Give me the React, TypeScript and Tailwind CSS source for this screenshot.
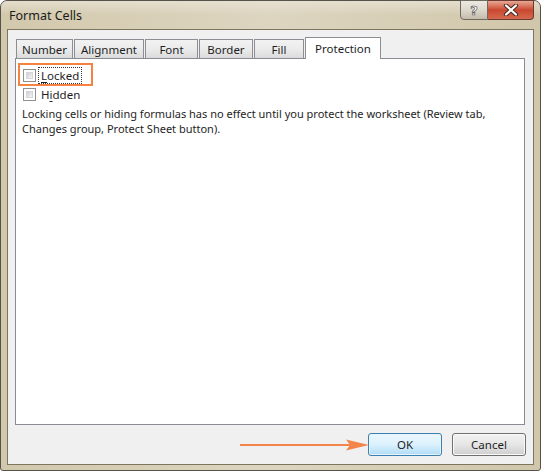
import React from "react";

const font = { fontFamily: '"Noto Sans", "DejaVu Sans", sans-serif' };

function Checkbox() {
  return (
    <div className="w-[13px] h-[13px] border border-[#8e8f8f] bg-white p-[2px] shrink-0">
      <div className="w-full h-full bg-gradient-to-br from-[#cbcfd5] to-[#f6f6f6] border border-[#d4d6da]" />
    </div>
  );
}

function Tab({ label, w }: { label: string; w: string }) {
  return (
    <div
      className={`${w} h-[19px] border border-b-0 border-[#8c8e94] bg-gradient-to-b from-[#f2f2f2] via-[#ebebeb] to-[#dbdbdb] flex items-center justify-center text-[11.5px] text-[#1e1e1e] leading-none pt-[1px]`}
    >
      {label}
    </div>
  );
}

export default function App() {
  return (
    <div className="w-[541px] h-[471px] bg-white" style={font}>
      <div className="relative w-[541px] h-[471px] rounded-t-[7px] rounded-b-[3px] border border-[#55524a] bg-gradient-to-r from-[#d2c8ac] via-[#ddd5c0] to-[#d0c6aa] flex flex-col">
        <div className="absolute inset-x-0 top-0 h-[14px] rounded-t-[6px] bg-gradient-to-b from-[#ebe6d9]/70 to-transparent pointer-events-none" />
        {/* title bar */}
        <div className="relative h-[28px] flex items-start">
          <div className="pl-[8px] pt-[7px] text-[12.5px] text-[#1b1b1b] leading-[16px]">Format Cells</div>
          <div className="ml-auto mr-[6px] -mt-px flex">
            <div className="w-[28px] h-[20px] border border-[#6e6a60] rounded-bl-[4px] bg-gradient-to-b from-[#ece9e2] via-[#ddd8cc] to-[#c3bcab] flex items-center justify-center">
              <span
                className="text-[13px] font-bold text-white leading-none"
                style={{ fontFamily: '"DejaVu Sans", sans-serif', WebkitTextStroke: "0.6px #3f3f3f" }}
              >
                ?
              </span>
            </div>
            <div className="w-[46px] h-[20px] border border-l-0 border-[#6b3a30] rounded-br-[4px] bg-gradient-to-b from-[#e7a795] via-[#c9472f] to-[#d5694f] flex items-center justify-center">
              <svg width="16" height="12" viewBox="0 0 16 12">
                <path d="M3 1.5 L13 10.5 M13 1.5 L3 10.5" stroke="#4a2a22" strokeWidth="4.2" strokeLinecap="round" />
                <path d="M3 1.5 L13 10.5 M13 1.5 L3 10.5" stroke="#ffffff" strokeWidth="2.2" strokeLinecap="round" />
              </svg>
            </div>
          </div>
        </div>

        {/* client */}
        <div className="mx-[6px] h-[436px] border border-[#7d7560] bg-[#f0f0f0] flex flex-col">
          {/* tabs */}
          <div className="pt-[7px] pl-[8px] flex items-end gap-[1px] relative z-10">
            <Tab label="Number" w="w-[57px]" />
            <Tab label="Alignment" w="w-[70px]" />
            <Tab label="Font" w="w-[53px]" />
            <Tab label="Border" w="w-[54px]" />
            <Tab label="Fill" w="w-[50px]" />
            <div className="w-[76px] h-[22px] -mb-px border border-b-0 border-[#8c8e94] bg-white flex items-start justify-center text-[11.5px] text-[#1e1e1e] leading-none pt-[5px]">
              Protection
            </div>
          </div>
          {/* panel */}
          <div className="relative ml-[7px] mr-[8px] h-[367px] border border-[#898c95] bg-white text-[11px] text-[#1e1e1e]">
            <div className="pl-[7px] pt-[10px] flex flex-col gap-[6px] text-[11.5px]">
              <div className="flex items-center h-[13px]">
                <Checkbox />
                <span className="ml-[4px] px-[1px] leading-[13px] outline outline-1 outline-dotted outline-[#333] outline-offset-[1px]">
                  <span className="underline underline-offset-2">L</span>ocked
                </span>
              </div>
              <div className="flex items-center h-[13px]">
                <Checkbox />
                <span className="ml-[5px] leading-[13px]">
                  H<span className="underline underline-offset-2">i</span>dden
                </span>
              </div>
            </div>
            <p className="pl-[6px] pt-[5px] leading-[15px] whitespace-nowrap">
              Locking cells or hiding formulas has no effect until you protect the worksheet (Review tab,
              <br />
              Changes group, Protect Sheet button).
            </p>
            {/* annotation box */}
            <div className="absolute left-[2px] top-[4px] w-[75px] h-[23px] border-2 border-[#f58240]" />
          </div>
          {/* buttons */}
          <div className="relative mt-[8px] pr-[7px] flex justify-end gap-[10px] text-[11.5px] text-[#1e1e1e]">
            <div className="w-[74px] h-[23px] rounded-[3px] border border-[#3c7fb1] bg-gradient-to-b from-[#ecf7fd] via-[#dbf1fd] to-[#b0dcf6] flex items-center justify-center shadow-[inset_0_0_0_1px_#e6f5fd]">
              OK
            </div>
            <div className="w-[74px] h-[23px] rounded-[3px] border border-[#707070] bg-gradient-to-b from-[#f2f2f2] via-[#e6e6e6] to-[#cfcfcf] flex items-center justify-center shadow-[inset_0_0_0_1px_#fafafa]">
              Cancel
            </div>
            {/* arrow annotation */}
            <svg className="absolute left-[232px] top-[5px]" width="130" height="14" viewBox="0 0 130 14">
              <line x1="0" y1="7" x2="112" y2="7" stroke="#f5844a" strokeWidth="2" />
              <path d="M106 1.5 L129 7 L106 12.5 L110 7 Z" fill="#f5844a" />
            </svg>
          </div>
        </div>
      </div>
    </div>
  );
}
